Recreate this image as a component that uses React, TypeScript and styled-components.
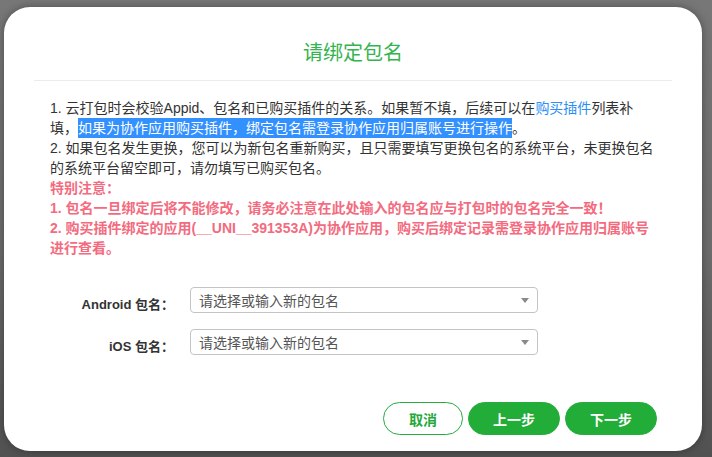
import React from "react";
import styled, { createGlobalStyle } from "styled-components";

const Global = createGlobalStyle`
  html, body { margin: 0; padding: 0; }
  body {
    width: 712px;
    height: 457px;
    overflow: hidden;
    background: linear-gradient(180deg, #777777 0%, #6c6c6c 55%, #515151 100%);
    font-family: "Liberation Sans", "Noto Sans CJK SC", sans-serif;
  }
`;

const Backdrop = styled.div`
  box-sizing: border-box;
  width: 712px;
  height: 457px;
  padding: 7px 10px 6px 4px;
  display: flex;
`;

const Dialog = styled.div`
  box-sizing: border-box;
  width: 698px;
  height: 444px;
  background: #ffffff;
  border-radius: 26px;
  box-shadow: 0 0 9px rgba(0, 0, 0, 0.35);
  display: flex;
  flex-direction: column;
  padding-top: 31px;
  padding-bottom: 16px;
`;

const Title = styled.h1`
  margin: 0;
  text-align: center;
  font-size: 20px;
  line-height: 28px;
  font-weight: normal;
  color: #33b44f;
  font-family: "Noto Sans CJK SC", sans-serif;
`;

const Divider = styled.div`
  height: 1px;
  background: #ececec;
  margin: 14px 30px 0 30px;
`;

const Notes = styled.div`
  margin: 17px 46px 0 46px;
  font-size: 14px;
  line-height: 20px;
  color: #333333;
`;

const Line = styled.div<{ $warn?: boolean }>`
  color: ${(p) => (p.$warn ? "#f36b7e" : "#333333")};
  font-weight: ${(p) => (p.$warn ? "bold" : "normal")};
`;

const Link = styled.span`
  color: #2b8ff5;
`;

const Selected = styled.span`
  background: #3390ff;
  color: #ffffff;
  padding: 2px 0;
`;

const Form = styled.div`
  margin: 29px 0 0 46px;
  display: flex;
  flex-direction: column;
  gap: 16px;
`;

const Row = styled.div`
  display: flex;
  align-items: center;
`;

const Label = styled.label`
  width: 124px;
  margin-right: 16px;
  margin-top: 6px;
  text-align: right;
  font-size: 13px;
  font-weight: bold;
  color: #333333;
`;

const Select = styled.div`
  box-sizing: border-box;
  width: 348px;
  height: 26px;
  border: 1px solid #c4c4c4;
  border-radius: 4px;
  background: #ffffff;
  display: flex;
  align-items: center;
  justify-content: space-between;
  padding: 0 8px 0 8px;
`;

const Placeholder = styled.span`
  font-size: 14px;
  color: #555555;
  font-family: "Noto Sans CJK SC", sans-serif;
  line-height: 24px;
`;

const Caret = styled.svg`
  width: 8px;
  height: 5px;
  display: block;
`;

const Footer = styled.div`
  margin-top: auto;
  padding-right: 45px;
  display: flex;
  justify-content: flex-end;
  gap: 5px;
`;

const Button = styled.button<{ $primary?: boolean; $w: number }>`
  box-sizing: border-box;
  width: ${(p) => p.$w}px;
  height: 33px;
  border-radius: 17px;
  border: 1px solid #24ad3c;
  background: ${(p) => (p.$primary ? "#22ad38" : "#ffffff")};
  color: ${(p) => (p.$primary ? "#ffffff" : "#24a83a")};
  font-family: "Noto Sans CJK SC", sans-serif;
  font-size: 14px;
  font-weight: bold;
  padding: 0;
  cursor: pointer;
`;

const PackageSelect = ({ label }: { label: string }) => (
  <Row>
    <Label>{label}</Label>
    <Select>
      <Placeholder>请选择或输入新的包名</Placeholder>
      <Caret viewBox="0 0 8 5">
        <polygon points="0,0 8,0 4,5" fill="#8a8a8a" />
      </Caret>
    </Select>
  </Row>
);

export default function App() {
  return (
    <>
      <Global />
      <Backdrop>
        <Dialog>
          <Title>请绑定包名</Title>
          <Divider />
          <Notes>
            <Line>
              1. 云打包时会校验Appid、包名和已购买插件的关系。如果暂不填，后续可以在
              <Link>购买插件</Link>列表补填，
              <Selected>如果为协作应用购买插件，绑定包名需登录协作应用归属账号进行操作</Selected>。
            </Line>
            <Line>
              2. 如果包名发生更换，您可以为新包名重新购买，且只需要填写更换包名的系统平台，未更换包名的系统平台留空即可，请勿填写已购买包名。
            </Line>
            <Line $warn>特别注意：</Line>
            <Line $warn>1. 包名一旦绑定后将不能修改，请务必注意在此处输入的包名应与打包时的包名完全一致！</Line>
            <Line $warn>
              2. 购买插件绑定的应用(__UNI__391353A)为协作应用，购买后绑定记录需登录协作应用归属账号进行查看。
            </Line>
          </Notes>
          <Form>
            <PackageSelect label="Android 包名：" />
            <PackageSelect label="iOS 包名：" />
          </Form>
          <Footer>
            <Button $w={80}>取消</Button>
            <Button $w={92} $primary>上一步</Button>
            <Button $w={92} $primary>下一步</Button>
          </Footer>
        </Dialog>
      </Backdrop>
    </>
  );
}
